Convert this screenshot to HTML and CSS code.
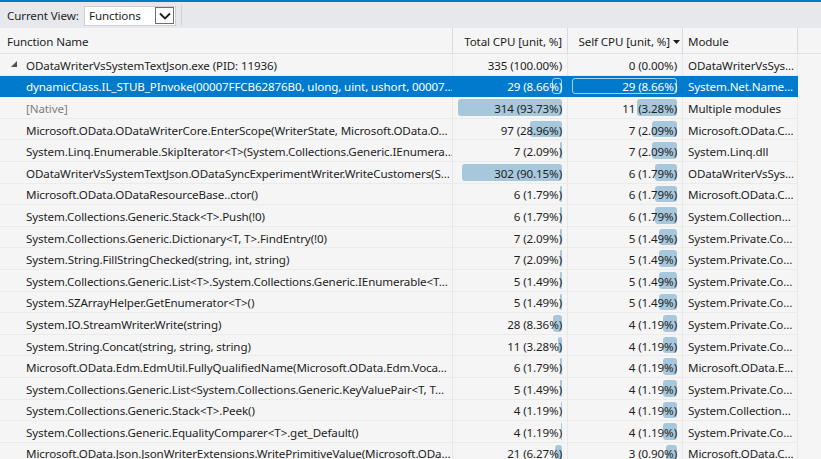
FILE: index.html
```html
<!DOCTYPE html>
<html>
<head>
<meta charset="utf-8">
<link rel="stylesheet" href="styles.css">
</head>
<body>
<div class="app">
  <div class="toolbar">
    <span class="label">Current View:</span>
    <div class="combo">
      <span>Functions</span>
      <span class="combo-btn"><svg width="12" height="8" viewBox="0 0 12 8"><polyline points="1,1.5 6,6.5 11,1.5" fill="none" stroke="#1e1e1e" stroke-width="1.8"/></svg></span>
    </div>
    <span class="tsep"></span>
  </div>
  <div class="grid">
    <div class="row head">
      <div class="cell name">Function Name</div>
      <div class="cell num">Total CPU [unit, %]</div>
      <div class="cell num sorted">Self CPU [unit, %]<svg class="sort" width="7" height="4" viewBox="0 0 7 4"><polygon points="0,0 7,0 3.5,4" fill="#1e1e1e"/></svg></div>
      <div class="cell mod">Module</div>
    </div>

    <div class="row">
      <div class="cell name"><svg class="twisty" width="6" height="6" viewBox="0 0 6 6"><polygon points="6,0 6,6 0,6" fill="#505050"/></svg>ODataWriterVsSystemTextJson.exe (PID: 11936)</div>
      <div class="cell num"><span class="v">335 (100.00%)</span></div>
      <div class="cell num"><span class="v">0 (0.00%)</span></div>
      <div class="cell mod">ODataWriterVsSys...</div>
    </div>

    <div class="row sel">
      <div class="cell name">dynamicClass.IL_STUB_PInvoke(00007FFCB62876B0, ulong, uint, ushort, 00007...</div>
      <div class="cell num"><i class="bar" style="width:9.6px"></i><span class="v">29 (8.66%)</span></div>
      <div class="cell num"><i class="bar" style="width:105px"></i><span class="v">29 (8.66%)</span></div>
      <div class="cell mod">System.Net.Name...</div>
    </div>

    <div class="row">
      <div class="cell name native">[Native]</div>
      <div class="cell num"><i class="bar" style="width:104px"></i><span class="v">314 (93.73%)</span></div>
      <div class="cell num"><i class="bar" style="width:39.8px"></i><span class="v">11 (3.28%)</span></div>
      <div class="cell mod">Multiple modules</div>
    </div>

    <div class="row">
      <div class="cell name">Microsoft.OData.ODataWriterCore.EnterScope(WriterState, Microsoft.OData.O...</div>
      <div class="cell num"><i class="bar" style="width:32.1px"></i><span class="v">97 (28.96%)</span></div>
      <div class="cell num"><i class="bar" style="width:25.3px"></i><span class="v">7 (2.09%)</span></div>
      <div class="cell mod">Microsoft.OData.C...</div>
    </div>

    <div class="row">
      <div class="cell name">System.Linq.Enumerable.SkipIterator&lt;T&gt;(System.Collections.Generic.IEnumera...</div>
      <div class="cell num"><i class="bar" style="width:2.3px"></i><span class="v">7 (2.09%)</span></div>
      <div class="cell num"><i class="bar" style="width:25.3px"></i><span class="v">7 (2.09%)</span></div>
      <div class="cell mod">System.Linq.dll</div>
    </div>

    <div class="row">
      <div class="cell name">ODataWriterVsSystemTextJson.ODataSyncExperimentWriter.WriteCustomers(S...</div>
      <div class="cell num"><i class="bar" style="width:100px"></i><span class="v">302 (90.15%)</span></div>
      <div class="cell num"><i class="bar" style="width:21.7px"></i><span class="v">6 (1.79%)</span></div>
      <div class="cell mod">ODataWriterVsSys...</div>
    </div>

    <div class="row">
      <div class="cell name">Microsoft.OData.ODataResourceBase..ctor()</div>
      <div class="cell num"><i class="bar" style="width:2px"></i><span class="v">6 (1.79%)</span></div>
      <div class="cell num"><i class="bar" style="width:21.7px"></i><span class="v">6 (1.79%)</span></div>
      <div class="cell mod">Microsoft.OData.C...</div>
    </div>

    <div class="row">
      <div class="cell name">System.Collections.Generic.Stack&lt;T&gt;.Push(!0)</div>
      <div class="cell num"><i class="bar" style="width:2px"></i><span class="v">6 (1.79%)</span></div>
      <div class="cell num"><i class="bar" style="width:21.7px"></i><span class="v">6 (1.79%)</span></div>
      <div class="cell mod">System.Collection...</div>
    </div>

    <div class="row">
      <div class="cell name">System.Collections.Generic.Dictionary&lt;T, T&gt;.FindEntry(!0)</div>
      <div class="cell num"><i class="bar" style="width:2.3px"></i><span class="v">7 (2.09%)</span></div>
      <div class="cell num"><i class="bar" style="width:18.1px"></i><span class="v">5 (1.49%)</span></div>
      <div class="cell mod">System.Private.Co...</div>
    </div>

    <div class="row">
      <div class="cell name">System.String.FillStringChecked(string, int, string)</div>
      <div class="cell num"><i class="bar" style="width:2.3px"></i><span class="v">7 (2.09%)</span></div>
      <div class="cell num"><i class="bar" style="width:18.1px"></i><span class="v">5 (1.49%)</span></div>
      <div class="cell mod">System.Private.Co...</div>
    </div>

    <div class="row">
      <div class="cell name">System.Collections.Generic.List&lt;T&gt;.System.Collections.Generic.IEnumerable&lt;T...</div>
      <div class="cell num"><i class="bar" style="width:1.7px"></i><span class="v">5 (1.49%)</span></div>
      <div class="cell num"><i class="bar" style="width:18.1px"></i><span class="v">5 (1.49%)</span></div>
      <div class="cell mod">System.Private.Co...</div>
    </div>

    <div class="row">
      <div class="cell name">System.SZArrayHelper.GetEnumerator&lt;T&gt;()</div>
      <div class="cell num"><i class="bar" style="width:1.7px"></i><span class="v">5 (1.49%)</span></div>
      <div class="cell num"><i class="bar" style="width:18.1px"></i><span class="v">5 (1.49%)</span></div>
      <div class="cell mod">System.Private.Co...</div>
    </div>

    <div class="row">
      <div class="cell name">System.IO.StreamWriter.Write(string)</div>
      <div class="cell num"><i class="bar" style="width:9.3px"></i><span class="v">28 (8.36%)</span></div>
      <div class="cell num"><i class="bar" style="width:14.5px"></i><span class="v">4 (1.19%)</span></div>
      <div class="cell mod">System.Private.Co...</div>
    </div>

    <div class="row">
      <div class="cell name">System.String.Concat(string, string, string)</div>
      <div class="cell num"><i class="bar" style="width:3.6px"></i><span class="v">11 (3.28%)</span></div>
      <div class="cell num"><i class="bar" style="width:14.5px"></i><span class="v">4 (1.19%)</span></div>
      <div class="cell mod">System.Private.Co...</div>
    </div>

    <div class="row">
      <div class="cell name">Microsoft.OData.Edm.EdmUtil.FullyQualifiedName(Microsoft.OData.Edm.Voca...</div>
      <div class="cell num"><i class="bar" style="width:2px"></i><span class="v">6 (1.79%)</span></div>
      <div class="cell num"><i class="bar" style="width:14.5px"></i><span class="v">4 (1.19%)</span></div>
      <div class="cell mod">Microsoft.OData.E...</div>
    </div>

    <div class="row">
      <div class="cell name">System.Collections.Generic.List&lt;System.Collections.Generic.KeyValuePair&lt;T, T...</div>
      <div class="cell num"><i class="bar" style="width:1.7px"></i><span class="v">5 (1.49%)</span></div>
      <div class="cell num"><i class="bar" style="width:14.5px"></i><span class="v">4 (1.19%)</span></div>
      <div class="cell mod">System.Private.Co...</div>
    </div>

    <div class="row">
      <div class="cell name">System.Collections.Generic.Stack&lt;T&gt;.Peek()</div>
      <div class="cell num"><i class="bar" style="width:1.4px"></i><span class="v">4 (1.19%)</span></div>
      <div class="cell num"><i class="bar" style="width:14.5px"></i><span class="v">4 (1.19%)</span></div>
      <div class="cell mod">System.Collection...</div>
    </div>

    <div class="row">
      <div class="cell name">System.Collections.Generic.EqualityComparer&lt;T&gt;.get_Default()</div>
      <div class="cell num"><i class="bar" style="width:1.4px"></i><span class="v">4 (1.19%)</span></div>
      <div class="cell num"><i class="bar" style="width:14.5px"></i><span class="v">4 (1.19%)</span></div>
      <div class="cell mod">System.Private.Co...</div>
    </div>

    <div class="row">
      <div class="cell name">Microsoft.OData.Json.JsonWriterExtensions.WritePrimitiveValue(Microsoft.ODa...</div>
      <div class="cell num"><i class="bar" style="width:7px"></i><span class="v">21 (6.27%)</span></div>
      <div class="cell num"><i class="bar" style="width:10.9px"></i><span class="v">3 (0.90%)</span></div>
      <div class="cell mod">Microsoft.OData.C...</div>
    </div>
  </div>
</div>
</body>
</html>
```

FILE: styles.css
```css
html, body {
  margin: 0;
  padding: 0;
  background: #f5f5f5;
  overflow: hidden;
}

body {
  font-family: "Segoe UI", "Noto Sans", "Open Sans", sans-serif;
  font-size: 11.6px;
  letter-spacing: -0.12px;
  color: #1e1e1e;
}

.app {
  border-top: 2px solid #007acc;
  height: 457px;
  overflow: hidden;
}

.toolbar {
  height: 26px;
  background: #e7e8ec;
  display: flex;
  align-items: center;
  padding-left: 7px;
}

.label {
  width: 77px;
  padding-top: 1px;
}

.combo {
  box-sizing: border-box;
  width: 92px;
  height: 20px;
  margin-top: 1px;
  background: #fff;
  border: 1px solid #cccedb;
  display: flex;
  align-items: center;
  justify-content: space-between;
  padding-left: 4px;
  padding-right: 1px;
}

.combo-btn {
  box-sizing: border-box;
  width: 19px;
  height: 17px;
  border: 1px solid #707070;
  background: #fcfcfc;
  display: flex;
  align-items: center;
  justify-content: center;
}

.tsep {
  width: 1px;
  height: 20px;
  margin-left: 5px;
  background: #cccedb;
}

.grid {
  display: flex;
  flex-direction: column;
}

.row {
  display: grid;
  grid-template-columns: 453px 115px 115px 115px;
  height: 21.6px;
  box-sizing: border-box;
}

.row.head {
  height: 26px;
  width: 821px;
  border-bottom: 1px solid #e0e0e6;
}

.cell {
  box-sizing: border-box;
  border-right: 1px solid #e8e8e8;
  border-bottom: 1px solid #ebebeb;
  white-space: nowrap;
  overflow: hidden;
  display: flex;
  align-items: center;
  padding-top: 2px;
  position: relative;
}

.head .cell {
  border-right: 1px solid #d8d9e2;
  border-bottom: none;
}

.name {
  padding-left: 26px;
}

.head .name {
  padding-left: 7px;
}

.twisty {
  position: absolute;
  left: 11px;
  top: 7px;
}

.native {
  color: #808080;
}

.num {
  justify-content: flex-end;
  padding-right: 5px;
}

.sorted {
  padding-right: 2px;
}

.sort {
  margin-left: 3px;
  margin-top: 1px;
}

.mod {
  padding-left: 5px;
}

.v {
  position: relative;
  z-index: 1;
}

.bar {
  position: absolute;
  right: 5px;
  top: 2px;
  bottom: 2px;
  background: #a7c8dc;
  border-radius: 3px;
}

.sel .cell {
  background: #007acc;
  color: #fff;
  border-color: #007acc;
}

.sel .bar {
  background: transparent;
  border: 1px solid #a9cdee;
  box-sizing: border-box;
}
```
